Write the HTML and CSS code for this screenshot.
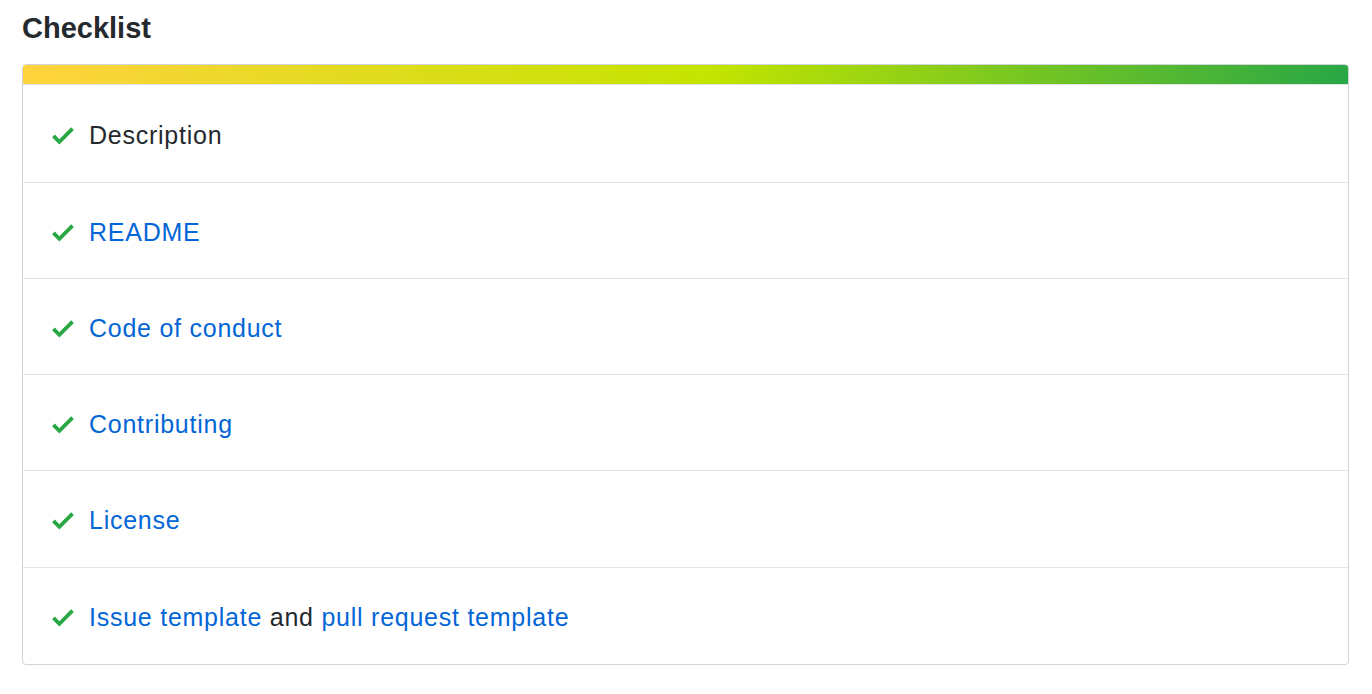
FILE: index.html
```html
<!DOCTYPE html>
<html>
<head>
<meta charset="utf-8">
<link rel="stylesheet" href="styles.css">
</head>
<body>
<div class="page">
  <h2 class="title">Checklist</h2>
  <div class="box">
    <div class="bar"></div>
    <ul class="list">
      <li class="row"><svg class="check" viewBox="0 0 12 16"><path d="M12 5l-8 8-4-4 1.5-1.5L4 10l6.5-6.5L12 5z"/></svg><span class="plain">Description</span></li>
      <li class="row"><svg class="check" viewBox="0 0 12 16"><path d="M12 5l-8 8-4-4 1.5-1.5L4 10l6.5-6.5L12 5z"/></svg><a class="link" href="#">README</a></li>
      <li class="row"><svg class="check" viewBox="0 0 12 16"><path d="M12 5l-8 8-4-4 1.5-1.5L4 10l6.5-6.5L12 5z"/></svg><a class="link" href="#">Code of conduct</a></li>
      <li class="row"><svg class="check" viewBox="0 0 12 16"><path d="M12 5l-8 8-4-4 1.5-1.5L4 10l6.5-6.5L12 5z"/></svg><a class="link" href="#">Contributing</a></li>
      <li class="row row-tall"><svg class="check" viewBox="0 0 12 16"><path d="M12 5l-8 8-4-4 1.5-1.5L4 10l6.5-6.5L12 5z"/></svg><a class="link" href="#">License</a></li>
      <li class="row row-tall"><svg class="check" viewBox="0 0 12 16"><path d="M12 5l-8 8-4-4 1.5-1.5L4 10l6.5-6.5L12 5z"/></svg><span class="plain"><a class="link" href="#">Issue template</a> and <a class="link" href="#">pull request template</a></span></li>
    </ul>
  </div>
</div>
</body>
</html>
```

FILE: styles.css
```css
html, body {
  margin: 0;
  padding: 0;
  background: #fff;
}
body {
  font-family: "Liberation Sans", Arial, sans-serif;
  color: #24292e;
}
.page {
  padding: 10px 23px 0 22px;
}
.title {
  margin: 0 0 18px 0;
  font-size: 29px;
  line-height: 36px;
  font-weight: bold;
  color: #24292e;
}
.box {
  border: 1px solid #d1d5da;
  border-radius: 4px;
  overflow: hidden;
}
.bar {
  height: 19px;
  background: linear-gradient(to right, #ffd33d 0%, #c3e400 52%, #28a745 100%);
  border-bottom: 1px solid #e1e4e8;
}
.list {
  list-style: none;
  margin: 0;
  padding: 0;
}
.row {
  display: flex;
  align-items: center;
  height: 96px;
  box-sizing: border-box;
  padding: 3px 0 0 29px;
  border-top: 1px solid #e1e4e8;
  font-size: 25px;
  letter-spacing: 0.75px;
}
.row:first-child {
  border-top: none;
  height: 97px;
}
.row.row-tall {
  height: 97px;
}
.check {
  width: 22px;
  height: 29px;
  fill: #28a745;
  margin-right: 15px;
  flex: none;
}
.plain {
  color: #24292e;
}
.link {
  color: #0366d6;
  text-decoration: none;
}
```
